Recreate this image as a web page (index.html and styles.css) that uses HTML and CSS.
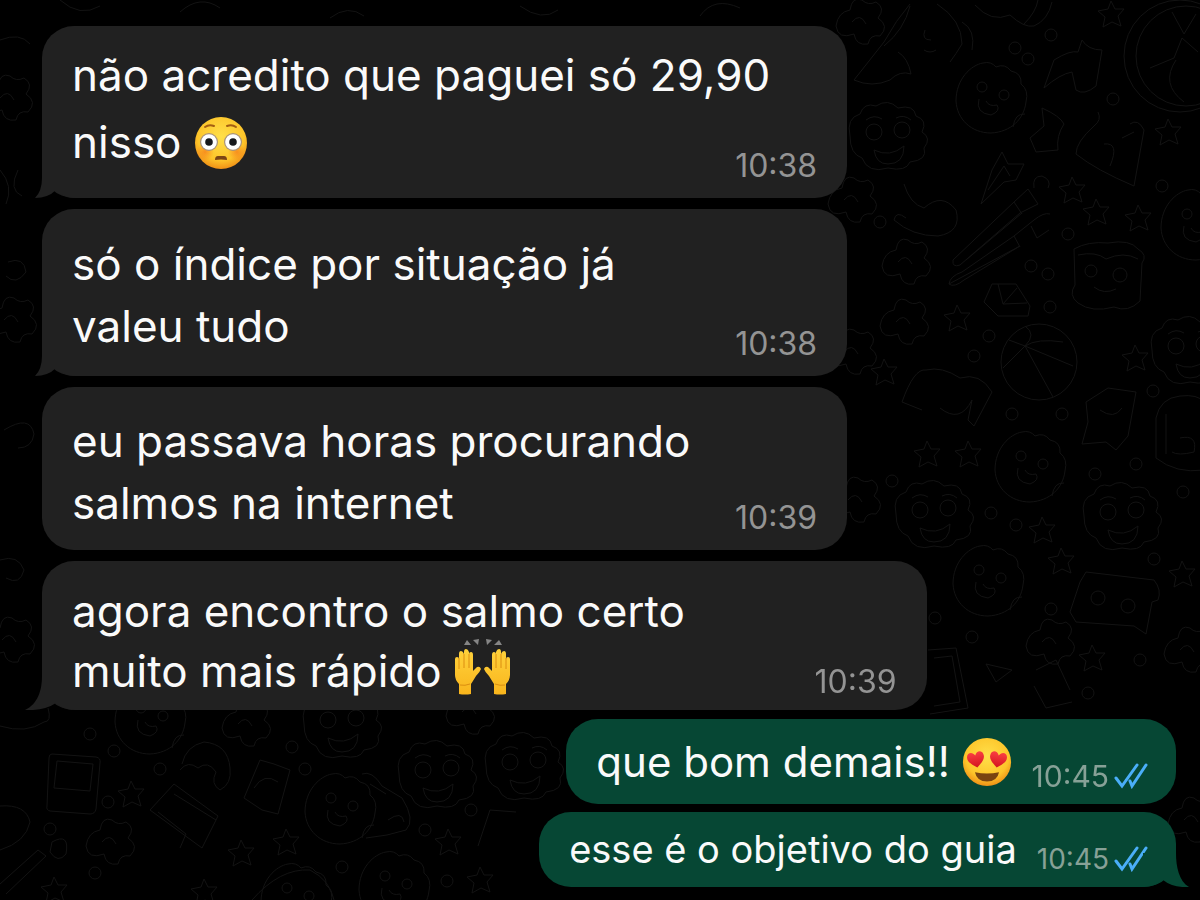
FILE: index.html
```html
<!DOCTYPE html>
<html lang="pt-BR">
<head>
  <meta charset="UTF-8">
  <meta name="viewport" content="width=device-width, initial-scale=1.0">
  <title>Conversa</title>
  <link rel="stylesheet" href="styles.css">
</head>
<body>
  <!-- papel de parede -->
  <svg class="wallpaper" viewBox="0 0 1200 900" preserveAspectRatio="xMidYMid slice" aria-hidden="true">
    <defs>
      <g id="star"><path d="M0-13l4 8 9 0-6 7 3 10-9-4-9 5 2-10-7-6 10-2z"/></g>
      <g id="ring"><circle r="6"/></g>
      <g id="face">
        <path d="M-35 2C-35-20-20-34-8-36Q0-38 5-32Q14-36 20-28Q31-26 30-15Q38-9 35 3C33 20 20 33 0 34C-20 34-34 20-35 2z"/>
        <circle cx="-9" cy="-12" r="5"/><circle cx="13" cy="-4" r="5"/>
        <path d="M-12 0Q-16 14 0 16Q10 12 6 6Q-2 8-5 2M22 28Q24 14 34 15"/>
      </g>
      <g id="curly">
        <path d="M-38 0Q-42-18-28-22Q-24-34-12-30Q0-38 10-28Q26-32 28-20Q40-16 34-4Q44 2 36 12Q40 24 22 26Q18 36 0 32Q-20 38-26 22Q-38 18-38 0z"/>
        <circle cx="-14" cy="-4" r="8"/><circle cx="14" cy="-6" r="8"/>
        <path d="M-14 14Q2 22 16 10Q16 28 0 28Q-12 28-14 14zM-22-16q8-6 16-1M8-18q8-4 15 2"/>
      </g>
      <g id="box">
        <path d="M-34-28Q-20-36 0-34Q22-38 30-28Q40-22 34-14L32 24Q20 36 6 30Q-16 36-30 26Q-40 18-33 8z"/>
        <circle cx="-17" cy="-6" r="6"/><circle cx="12" cy="-2" r="7"/>
        <path d="M-14 10Q-4 18 8 12M-30-22Q-12-26-2-18Q16-26 30-18"/>
      </g>
      <g id="ball">
        <circle r="38"/>
        <path d="M-30-22L-14-16Q-2-24 24-20M-14-16L34 4M-14-16L14 35M-14-16L-36 6M-14-16Q-2-28-14-36"/>
      </g>
      <g id="photo"><path d="M-24-28l44 3q5 1 4 6l-4 46q-1 5-6 5l-40-3q-4-1-3-5l2-48q0-4 3-4zM-19-21l36 3-3 27-36-3z"/></g>
      <g id="blob"><path d="M-24 4Q-22-10-10-12Q-8-26 2-22Q8-16 16-20Q26-14 18-4Q30 4 20 14Q10 12 8 22Q-4 24-6 12Q-22 18-24 4zM-8 0q8-10 14 2"/></g>
    </defs>
    <g class="doodles">
      <path d="M910 4Q896 20 884 42L854 80Q872 88 890 80Q900 70 911 74Q908 58 898 52M884 46Q904 30 910 6"/>
      <path d="M937 4Q962 20 962 44Q956 54 950 62M962 22q14 8 10 28M925 30q-4 10 6 10M924 50q6 4 12 0"/>
      <path d="M975 5q16 18 35 10Q1024 28 1034 26Q1048 20 1052 2M1024 24Q1036 12 1038 0"/>
      <path d="M1044 88L1054 60Q1070 50 1078 52L1082 40Q1088 50 1102 50Q1098 74 1096 86Q1084 96 1076 90L1072 72Q1060 74 1044 88z"/>
      <circle cx="1180" cy="56" r="56"/><circle cx="1186" cy="56" r="50"/>
      <path d="M1150 68l24-10 8-20 16 14M1176 60q-16 24 8 42M1172 12l12 22 12-20"/>
      <path d="M1098 112q4 8-4 14Q1076 142 1076 154Q1096 170 1134 186L1144 130Q1138 118 1130 124M1104 144q16-2 6 22M1122 138l12-6"/>
      <path d="M981 204L992 170L1002 152L1008 164L1024 164L1016 180L1004 182zM988 190l16-24 6 10"/>
      <path d="M1042 108q18 8 22 16Q1056 136 1058 150L1036 152L1030 138L1044 126z"/>
      <path d="M904 184q6 20 20 24 18-16 32 2 6 22-18 26Q912 236 894 220q2-10 12-2"/>
      <path d="M953 260L1014 202L1028 189L1038 204L1020 213L960 265Q952 268 953 260zM1014 202l8 12M1022 213L966 260M1034 188q-2-12 8-12 10 4 6 12"/>
      <path d="M949 284Q950 276 962 272L1014 236L1034 220Q1044 212 1050 214M1020 246L964 280Q954 288 949 284zM1014 236l6 11M1031 226l6 12 12-8"/>
      <path d="M984 302L992 284L1016 284L1030 306L1028 316H998zM998 284l5 20 24-1M1003 304l14-16M984 302l12 12"/>
      <path d="M902 402Q914 368 926 370Q942 366 960 378Q980 372 992 392L974 426L968 420L972 400Q960 424 940 408M902 402l20 8"/>
      <path d="M1086 402l22-14 28 4-8 44-12 14-10-8-24 2 6-22zM1100 410q14 10 22-2"/>
      <path d="M1156 458V418Q1160 398 1180 396Q1198 394 1204 402M1156 458Q1176 474 1204 470M1166 414v40M1180 438q18-4 14 14-16 4-22 0"/>
      <path d="M1080 582L1086 572L1154 580Q1162 590 1158 600L1152 602L1146 634L1134 626L1076 622L1070 612z"/>
      <circle cx="1098" cy="598" r="7"/><circle cx="1128" cy="606" r="7"/>
      <path d="M928 650L956 648L968 708L930 714M934 658l18-2 8 46-26 4"/>
      <path d="M986 664l26 6-16 12zM1036 670l20-10 14 30M1034 686l12 22 26-6"/>
      <path d="M150 810L174 784L218 816L202 848zM158 812l28 22-6 14M174 794l42 26"/>
      <path d="M182 764q4-18 22-22Q228 744 230 768q2 16-10 22-10-6-4-18-8-12-18-4-10-8-18 2"/>
      <path d="M244 798l16-38 14 4 16 6-12 44-16-4zM254 788q10-16 24-6"/>
      <path d="M362 774q10-4 20 12L402 798Q416 820 406 830Q388 836 366 838M370 784l16 10M388 820q14-10 16 2"/>
      <path d="M0 884L38 850l8 6L6 894M52 842q18-10 14 12-8 10-16-2zM0 806q26-2 30 16-4 20-30 28"/>
      <path d="M478 846l12-36 26 2M252 900Q280 868 310 870Q330 880 334 900M0 726q26 8 44-4 8 0 4-14"/>
      <path d="M0 170q14 16 6 34M0 40q20-8 30 4M8 262q16-6 18 10-10 14-20 4M4 430q26-16 30 4-2 14-16 14M0 560q18-6 24 10-4 16-18 8"/>
      <path d="M18 170q-10 20 4 26M60 0q20 18 40 6M180 12q20-18 40-4M330 18q18-14 34-2M520 6q22 16 38 4M700 16q14-20 40-8"/>
    </g>
    <g class="doodles">
      <use href="#face" x="991" y="99"/><use href="#curly" x="888" y="136"/><use href="#box" x="1108" y="277"/>
      <use href="#ball" x="1039" y="362"/><use href="#face" x="1030" y="468"/><use href="#curly" x="934" y="514"/>
      <use href="#face" x="988" y="582"/><use href="#curly" x="1122" y="516"/><use href="#face" x="1196" y="226"/>
      <use href="#curly" x="1190" y="350"/><use href="#blob" x="906" y="262"/><use href="#blob" x="904" y="322"/>
      <use href="#blob" x="1050" y="642"/><use href="#blob" x="1188" y="650"/><use href="#photo" x="76" y="782"/>
      <use href="#face" x="150" y="720"/><use href="#curly" x="342" y="724"/><use href="#face" x="340" y="810"/>
      <use href="#curly" x="437" y="774"/><use href="#face" x="394" y="888"/><use href="#blob" x="110" y="842"/>
      <use href="#curly" x="524" y="766"/><use href="#blob" x="246" y="724"/><use href="#face" x="296" y="900"/>
      <use href="#blob" x="470" y="712"/><use href="#blob" x="852" y="200"/><use href="#blob" x="852" y="352"/>
      <use href="#blob" x="856" y="500"/><use href="#blob" x="860" y="22"/><use href="#blob" x="12" y="320"/>
      <use href="#blob" x="8" y="98"/><use href="#blob" x="10" y="640"/><use href="#blob" x="1192" y="820"/>
      <use href="#star" x="1111" y="14"/><use href="#star" x="957" y="318"/><use href="#star" x="1096" y="212"/>
      <use href="#star" x="1138" y="218"/><use href="#star" x="1072" y="190"/><use href="#star" x="1135" y="358"/>
      <use href="#star" x="927" y="454"/><use href="#star" x="884" y="372"/><use href="#star" x="1042" y="530"/>
      <use href="#star" x="1061" y="561"/><use href="#star" x="1182" y="574"/><use href="#star" x="1092" y="658"/>
      <use href="#star" x="1168" y="132"/><use href="#star" x="131" y="794"/><use href="#star" x="241" y="853"/>
      <use href="#star" x="286" y="842"/><use href="#star" x="448" y="842"/><use href="#star" x="204" y="892"/>
      <use href="#star" x="54" y="890"/><use href="#star" x="480" y="880"/><use href="#star" x="968" y="454"/>
      <use href="#ring" x="1051" y="35"/><use href="#ring" x="1015" y="48"/><use href="#ring" x="1028" y="59"/>
      <use href="#ring" x="1113" y="99"/><use href="#ring" x="1162" y="186"/><use href="#ring" x="880" y="222"/>
      <use href="#ring" x="1068" y="234"/><use href="#ring" x="1031" y="266"/><use href="#ring" x="1048" y="274"/>
      <use href="#ring" x="1050" y="307"/><use href="#ring" x="989" y="336"/><use href="#ring" x="974" y="356"/>
      <use href="#ring" x="1012" y="414"/><use href="#ring" x="1062" y="414"/><use href="#ring" x="1153" y="391"/>
      <use href="#ring" x="1136" y="464"/><use href="#ring" x="1095" y="474"/><use href="#ring" x="1183" y="492"/>
      <use href="#ring" x="892" y="481"/><use href="#ring" x="991" y="513"/><use href="#ring" x="1016" y="525"/>
      <use href="#ring" x="1154" y="559"/><use href="#ring" x="1051" y="609"/><use href="#ring" x="972" y="637"/>
      <use href="#ring" x="935" y="618"/><use href="#ring" x="1140" y="660"/><use href="#ring" x="1088" y="693"/>
      <use href="#ring" x="90" y="734"/><use href="#ring" x="114" y="751"/><use href="#ring" x="160" y="769"/>
      <use href="#ring" x="108" y="802"/><use href="#ring" x="50" y="829"/><use href="#ring" x="95" y="873"/>
      <use href="#ring" x="305" y="769"/><use href="#ring" x="342" y="867"/><use href="#ring" x="425" y="830"/>
      <use href="#ring" x="471" y="810"/><use href="#ring" x="447" y="881"/><use href="#ring" x="292" y="747"/>
    </g>
  </svg>

  <main class="chat">
    <article class="bubble received first">
      <p class="message">não acredito que paguei só 29,90<br>nisso
        <svg class="emoji" viewBox="0 0 54 54" role="img" aria-label="rosto corado">
          <defs>
            <radialGradient id="skin" cx="50%" cy="38%" r="64%">
              <stop offset="0" stop-color="#ffe04a"/>
              <stop offset=".7" stop-color="#fdc52a"/>
              <stop offset="1" stop-color="#ee8a14"/>
            </radialGradient>
            <radialGradient id="blush">
              <stop offset="0" stop-color="#f46a16" stop-opacity=".6"/>
              <stop offset="1" stop-color="#f46a16" stop-opacity="0"/>
            </radialGradient>
          </defs>
          <circle cx="27" cy="27" r="26" fill="url(#skin)"/>
          <circle cx="11" cy="36" r="9" fill="url(#blush)"/>
          <circle cx="43" cy="36" r="9" fill="url(#blush)"/>
          <circle cx="15" cy="26" r="9" fill="#a8927a"/>
          <circle cx="39" cy="26" r="9" fill="#a8927a"/>
          <circle cx="15" cy="26" r="7.800" fill="#fff"/>
          <circle cx="39" cy="26" r="7.800" fill="#fff"/>
          <circle cx="15" cy="26" r="3.800" fill="#17191c"/>
          <circle cx="39" cy="26" r="3.800" fill="#17191c"/>
          <path d="M11 11q4-3 9-1M33 10q5-2 9 1" fill="none" stroke="#a45e12" stroke-width="2" stroke-linecap="round"/>
          <path d="M21 44q0-4 3-4h6q3 0 3 4-6-1-12 0z" fill="#7c4614"/>
        </svg>
      </p>
      <time class="time">10:38</time>
      <svg class="tail" viewBox="0 0 40 34" aria-hidden="true"><path d="M7 0V14Q7 27 0 34Q13 34 21 26Q29 34 40 34V0z"/></svg>
    </article>

    <article class="bubble received second">
      <p class="message">só o índice por situação já<br>valeu tudo</p>
      <time class="time">10:38</time>
      <svg class="tail" viewBox="0 0 40 34" aria-hidden="true"><path d="M7 0V14Q7 27 0 34Q13 34 21 26Q29 34 40 34V0z"/></svg>
    </article>

    <article class="bubble received third">
      <p class="message">eu passava horas procurando<br>salmos na internet</p>
      <time class="time">10:39</time>
    </article>

    <article class="bubble received wide">
      <p class="message">agora encontro o salmo certo<br>muito mais rápido
        <svg class="emoji hands" viewBox="0 0 58 58" role="img" aria-label="mãos para cima">
          <defs>
            <linearGradient id="palm" x1="0" y1="0" x2="0" y2="1">
              <stop offset="0" stop-color="#ffd23c"/>
              <stop offset="1" stop-color="#f9b51c"/>
            </linearGradient>
            <g id="hand">
              <path fill="url(#palm)" d="M5 56V46Q1 42 1 37V21Q1 19 3 19T5 21V16Q5 13 7 13T10 16V14Q10 11 12 11T15 14V16Q15 14 17 14T19 17V33L23 29Q26 28 27 31Q26 34 22 38Q19 43 17 46V56Q11 57 5 56z"/>
              <path d="M5 20V31M10 16V30M15 16V30M6 47q5 1 10-1" fill="none" stroke="#dc8e10"/>
            </g>
          </defs>
          <use href="#hand"/>
          <use href="#hand" transform="matrix(-1 0 0 1 57 0)"/>
          <path d="M10 7l3-5 4 5zM19 2l6-1-1 6zM32 1l6 1-5 5zM40 7l5-5 3 5z" fill="#858585"/>
        </svg>
      </p>
      <time class="time">10:39</time>
      <svg class="tail tail-long" viewBox="0 0 50 34" aria-hidden="true"><path d="M17 0C17 14 13 28 0 34Q19 35 31 27Q38 34 50 34V0z"/></svg>
    </article>

    <article class="bubble sent">
      <p class="message">que bom demais!!
        <svg class="emoji love" viewBox="0 0 54 54" role="img" aria-label="olhos de coração">
          <defs>
            <linearGradient id="heartRed" x1="0" y1="0" x2="0" y2="1">
              <stop offset="0" stop-color="#fa3e42"/>
              <stop offset="1" stop-color="#d3141f"/>
            </linearGradient>
            <path id="heart" d="M0 9C-7 4-10 0-9-4C-8-9-2-9 0-4C2-9 8-9 9-4C10 0 7 4 0 9z"/>
          </defs>
          <circle cx="27" cy="27" r="26" fill="url(#skin)"/>
          <use href="#heart" fill="url(#heartRed)" transform="translate(15 24) rotate(-10)"/>
          <use href="#heart" fill="url(#heartRed)" transform="translate(39 24) rotate(10)"/>
          <path d="M14 38Q27 41 40 38Q38 48 27 48T14 38z" fill="#794411"/>
        </svg>
      </p>
      <span class="status">
        <time class="time">10:45</time>
        <svg class="ticks" viewBox="0 0 34 26" role="img" aria-label="lida"><path d="M2 15L8 23L23 2M16 18L18 23L32 2"/></svg>
      </span>
    </article>

    <article class="bubble sent last">
      <p class="message">esse é o objetivo do guia</p>
      <span class="status">
        <time class="time">10:45</time>
        <svg class="ticks" viewBox="0 0 34 26" role="img" aria-label="lida"><path d="M2 15L8 23L23 2M16 18L18 23L32 2"/></svg>
      </span>
      <svg class="tail tail-sent" viewBox="0 0 46 34" aria-hidden="true"><path d="M33 0C33 14 36 28 46 34Q30 35 20 27Q12 34 0 34V0z"/></svg>
    </article>
  </main>
</body>
</html>
```

FILE: styles.css
```css
* {
  box-sizing: border-box;
  margin: 0;
  padding: 0;
}

body {
  background: #000;
  color: #fafafa;
  font-family: 'Inter', sans-serif;
  min-height: 100vh;
}

.wallpaper {
  position: fixed;
  inset: 0;
  width: 100%;
  height: 100%;
  z-index: -1;
}

.doodles {
  fill: none;
  stroke: #131313;
  stroke-width: 1;
  stroke-linejoin: round;
}

.chat {
  display: flex;
  flex-direction: column;
  align-items: flex-start;
  gap: 11px;
  padding: 26px 24px 12px 42px;
}

.bubble {
  position: relative;
  border-radius: 32px;
}

.received {
  display: grid;
  width: 71%;
  padding: 0 30px;
  background: #212121;
  color: #fafafa;
}

.received .message,
.received .time {
  grid-area: 1 / 1;
}

.received .time {
  align-self: end;
  justify-self: end;
  margin-bottom: 14px;
}

.message {
  font-size: 44px;
  line-height: 62px;
}

.first .message {
  line-height: 67px;
  padding: 16px 0 22px;
}

.second .message {
  padding: 24px 0 19px;
}

.third .message {
  padding: 23px 0 16px;
}

.wide {
  width: 78%;
}

.wide .message {
  line-height: 60px;
  padding: 20px 0 9px;
}

.time {
  font-size: 32px;
  line-height: 36px;
  color: #949494;
}

.wide .time {
  margin-bottom: 10px;
}

.sent {
  display: flex;
  align-items: flex-end;
  align-self: flex-end;
  gap: 20px;
  padding: 0 28px 0 30px;
  background: #064734;
  margin-top: -2px;
}

.sent .message {
  font-size: 42px;
  line-height: 85px;
}

.sent .time {
  font-size: 30px;
  color: #87a197;
}

.status {
  display: flex;
  align-items: center;
  gap: 5px;
  margin-bottom: 10px;
}

.last {
  margin-top: -3px;
}

.last .message {
  font-size: 38px;
  line-height: 75px;
}

.last .time {
  font-size: 28px;
}

.emoji {
  display: inline-block;
  width: 54px;
  height: 54px;
  margin: -4px 0;
  vertical-align: -8px;
}

.hands {
  width: 58px;
  height: 58px;
  vertical-align: -5px;
}

.love {
  width: 50px;
  height: 50px;
  vertical-align: -6px;
}

.ticks {
  width: 34px;
  height: 26px;
  fill: none;
  stroke: #4aaef8;
  stroke-width: 3;
  stroke-linecap: round;
}

.tail {
  position: absolute;
  left: -7px;
  bottom: 0;
  width: 40px;
  height: 34px;
  fill: #212121;
}

.tail-long {
  left: -17px;
  width: 50px;
}

.tail-sent {
  left: auto;
  right: -13px;
  width: 46px;
  fill: #064734;
}
```
